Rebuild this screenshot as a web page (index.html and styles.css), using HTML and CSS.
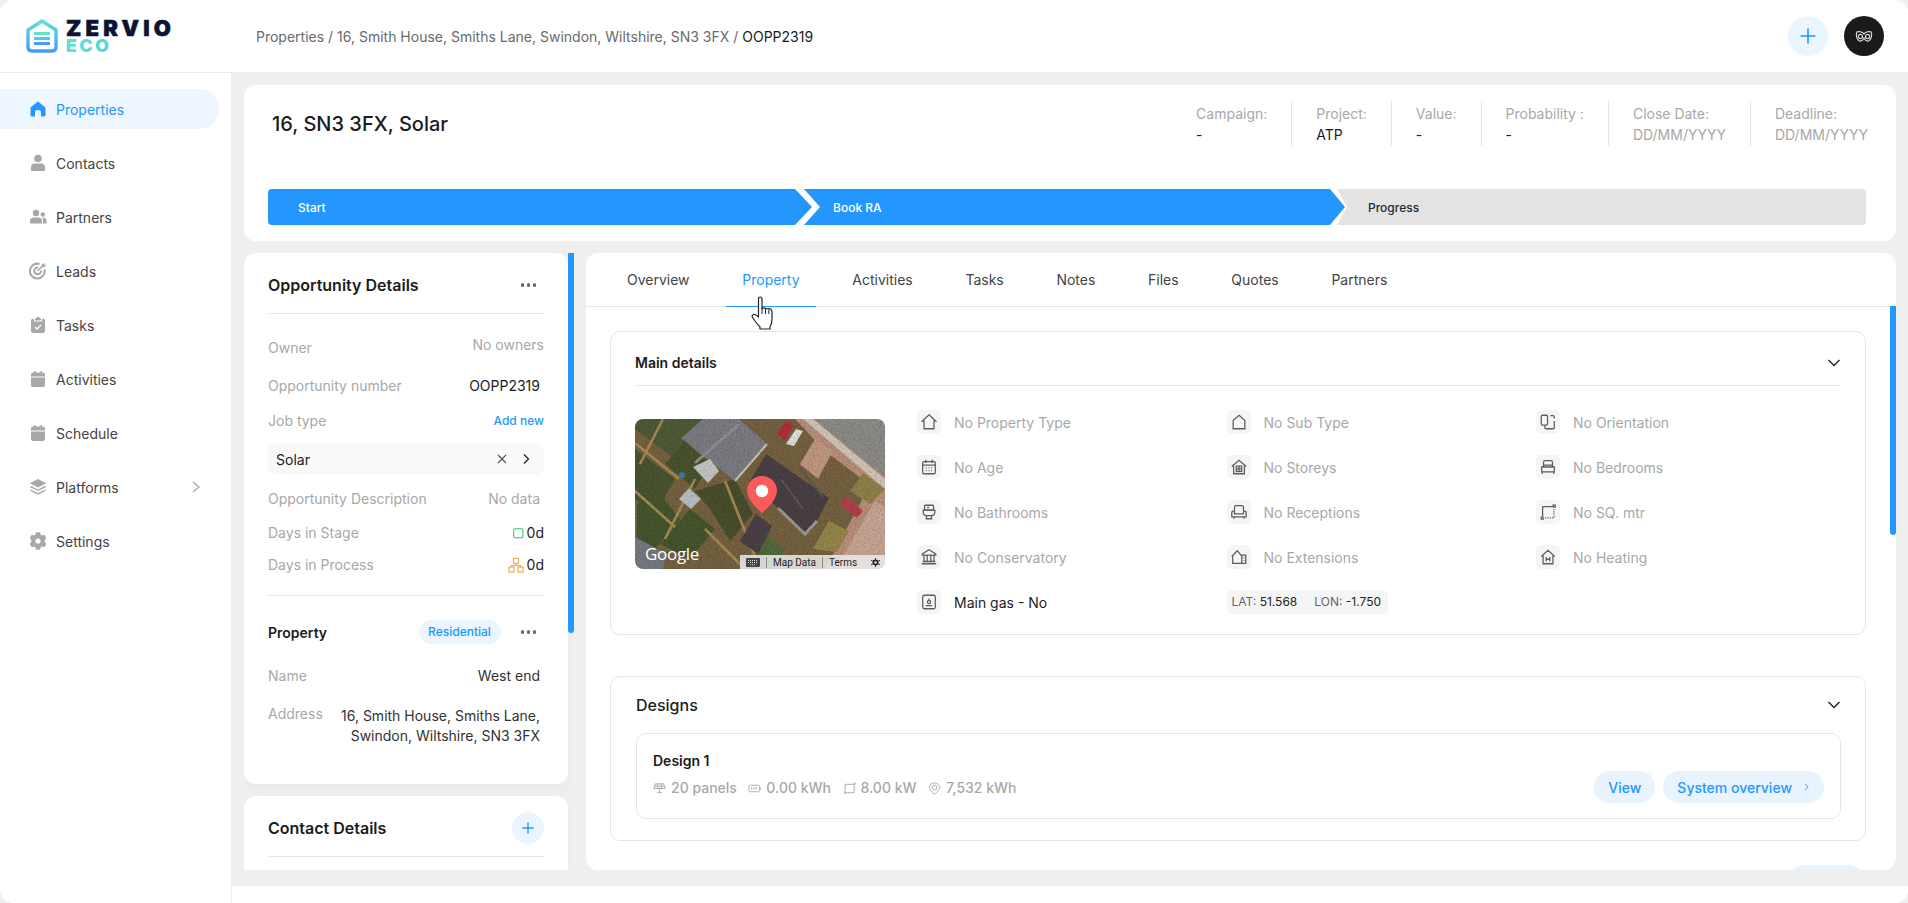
FILE: index.html
```html
<!DOCTYPE html>
<html lang="en">
<head>
    <meta charset="UTF-8">
    <meta name="viewport" content="width=device-width, initial-scale=1.0">
    <title>Zervio Eco - OOPP2319</title>
    <link rel="stylesheet" href="styles.css">
</head>
<body>
<div class="app">

    <header class="topbar">
        <div class="logo">
            <svg class="logo-mark" viewBox="0 0 32 34" width="32" height="34">
                <defs>
                    <linearGradient id="logoGrad" x1="0" y1="0" x2="0" y2="1">
                        <stop offset="0" stop-color="#62e0d6"/>
                        <stop offset="1" stop-color="#3f9dfb"/>
                    </linearGradient>
                </defs>
                <path d="M16 2 L30 11 V28 Q30 32 26 32 H6 Q2 32 2 28 V11 Z" fill="none" stroke="url(#logoGrad)" stroke-width="3.4" stroke-linejoin="round"/>
                <rect x="8" y="13" width="16" height="3" fill="#5fe3d0"/>
                <rect x="8" y="18" width="16" height="3" fill="#53c5ea"/>
                <rect x="8" y="23" width="16" height="3" fill="#459ffa"/>
            </svg>
            <div class="logo-text">
                <span class="logo-name">ZERVIO</span>
                <span class="logo-sub">ECO</span>
            </div>
        </div>
        <div class="breadcrumb">Properties / 16, Smith House, Smiths Lane, Swindon, Wiltshire, SN3 3FX / <b>OOPP2319</b></div>
        <div class="top-actions">
            <button class="round-btn" type="button">
                <svg viewBox="0 0 20 20" width="20" height="20"><path d="M10 2.5V17.5M2.5 10H17.5" stroke="#2497ff" stroke-width="1.6" fill="none"/></svg>
            </button>
            <div class="avatar">
                <svg viewBox="0 0 20 14" width="18" height="13" fill="none" stroke="#d8d8d8" stroke-width="1.3">
                    <path d="M10 4C8 1.5 4 1 2 2 .8 5 1.5 10 5 12 8 13 9.5 10 10 8 10.5 10 12 13 15 12 18.5 10 19.2 5 18 2 16 1 12 1.5 10 4Z"/>
                    <circle cx="6" cy="7" r="2.3"/>
                    <circle cx="14" cy="7" r="2.3"/>
                </svg>
            </div>
        </div>
    </header>

    <nav class="sidebar">
        <a class="nav-item active">
            <svg viewBox="0 0 18 18" width="18" height="18"><path d="M9 1.5 L16.5 7.5 V15 Q16.5 16.5 15 16.5 H12 V12 Q12 10 9 10 6 10 6 12 V16.5 H3 Q1.5 16.5 1.5 15 V7.5 Z" fill="#2497ff"/></svg>
            Properties
        </a>
        <a class="nav-item">
            <svg viewBox="0 0 18 18" width="18" height="18" fill="#a8a8a8"><circle cx="9" cy="4.5" r="3.8"/><path d="M2 17 V13.5 Q2 9.5 6 9.5 H12 Q16 9.5 16 13.5 V17 Z"/></svg>
            Contacts
        </a>
        <a class="nav-item">
            <svg viewBox="0 0 18 18" width="18" height="18" fill="#a8a8a8"><circle cx="7" cy="5" r="3.2"/><circle cx="13.8" cy="6.5" r="2.3"/><path d="M1 15.5 V13 Q1 9.5 4.5 9.5 H9.5 Q13 9.5 13 13 V15.5 Z"/><path d="M14 15.5 V12.5 Q14 10.5 13 9.7 H14.5 Q17.5 9.7 17.5 13 V15.5 Z"/></svg>
            Partners
        </a>
        <a class="nav-item">
            <svg viewBox="0 0 18 18" width="18" height="18" fill="none" stroke="#a8a8a8"><path d="M15.5 7.5 A7.4 7.4 0 1 1 10.5 2" stroke-width="2"/><path d="M12 8.5 A3.4 3.4 0 1 1 9 5.5" stroke-width="2"/><path d="M8.5 9 L14 3.5" stroke-width="1.6"/><path d="M12.5 3 L15 .8 L15.3 2.7 L17.3 3 L15 5.3 H12.5 Z" fill="#a8a8a8" stroke="none"/></svg>
            Leads
        </a>
        <a class="nav-item">
            <svg viewBox="0 0 18 18" width="18" height="18"><path d="M6 2.5 H7 Q7.5 .8 9 .8 10.5 .8 11 2.5 H12 V4.5 H6 Z M4 2.8 H5 V5.5 H13 V2.8 H14 Q16 2.8 16 4.8 V15 Q16 17 14 17 H4 Q2 17 2 15 V4.8 Q2 2.8 4 2.8 Z" fill="#a8a8a8"/><path d="M6 11 L8 13 L12 9" stroke="#fff" stroke-width="1.3" fill="none"/></svg>
            Tasks
        </a>
        <a class="nav-item">
            <svg viewBox="0 0 18 18" width="18" height="18" fill="#a8a8a8"><path d="M5 1h1.5v2.5H5zM11.5 1H13v2.5h-1.5z"/><path d="M4 2.5 H14 Q16 2.5 16 4.5 V6.5 H2 V4.5 Q2 2.5 4 2.5 Z"/><path d="M2 7.5 H16 V15 Q16 17 14 17 H4 Q2 17 2 15 Z"/></svg>
            Activities
        </a>
        <a class="nav-item">
            <svg viewBox="0 0 18 18" width="18" height="18" fill="#a8a8a8"><path d="M5 1h1.5v2.5H5zM11.5 1H13v2.5h-1.5z"/><path d="M4 2.5 H14 Q16 2.5 16 4.5 V6.5 H2 V4.5 Q2 2.5 4 2.5 Z"/><path d="M2 7.5 H16 V15 Q16 17 14 17 H4 Q2 17 2 15 Z"/></svg>
            Schedule
        </a>
        <a class="nav-item">
            <svg viewBox="0 0 18 18" width="18" height="18" fill="#a8a8a8"><path d="M9 1 L17.3 5.3 9 9.5 .7 5.3 Z"/><path d="M2.3 8 L9 11.4 15.7 8 17.3 8.9 9 13 .7 8.9 Z"/><path d="M2.3 11.7 L9 15 15.7 11.7 17.3 12.6 9 16.8 .7 12.6 Z"/></svg>
            Platforms
            <svg class="nav-arrow" viewBox="0 0 10 14" width="10" height="14"><path d="M2 2 L8 7 L2 12" stroke="#a8a8a8" stroke-width="1.3" fill="none"/></svg>
        </a>
        <a class="nav-item">
            <svg viewBox="0 0 18 18" width="18" height="18"><path d="M7.3 .8 H10.7 L11.2 3 13 4 15.2 3.3 16.9 6.2 15.2 7.8 V10.2 L16.9 11.8 15.2 14.7 13 14 11.2 15 10.7 17.2 H7.3 L6.8 15 5 14 2.8 14.7 1.1 11.8 2.8 10.2 V7.8 L1.1 6.2 2.8 3.3 5 4 6.8 3 Z" fill="#a8a8a8" stroke="#a8a8a8" stroke-linejoin="round"/><circle cx="9" cy="9" r="2.6" fill="#fff"/></svg>
            Settings
        </a>
    </nav>

    <div class="main">
        <main class="content">

            <section class="card summary">
                <div class="summary-top">
                    <h1>16, SN3 3FX, Solar</h1>
                    <div class="meta">
                        <div class="meta-item"><span>Campaign:</span><b>-</b></div>
                        <div class="meta-item"><span>Project:</span><b>ATP</b></div>
                        <div class="meta-item"><span>Value:</span><b>-</b></div>
                        <div class="meta-item"><span>Probability :</span><b>-</b></div>
                        <div class="meta-item"><span>Close Date:</span><b class="muted">DD/MM/YYYY</b></div>
                        <div class="meta-item"><span>Deadline:</span><b class="muted">DD/MM/YYYY</b></div>
                    </div>
                </div>
                <div class="stepper">
                    <div class="step step-first">Start</div>
                    <div class="step step-mid">Book RA</div>
                    <div class="step step-last">Progress</div>
                </div>
            </section>

            <div class="columns">
                <aside class="left-col">
                    <section class="card info-card">
                        <div class="info-head">
                            <h2>Opportunity Details</h2>
                            <span class="dots"><i></i><i></i><i></i></span>
                        </div>
                        <div class="row row-owner"><label>Owner</label><span class="soft">No owners</span></div>
                        <div class="row row-number"><label>Opportunity number</label><span class="inset">OOPP2319</span></div>
                        <div class="row row-job"><label>Job type</label><a class="add-new">Add new</a></div>
                        <div class="job-box">
                            <span>Solar</span>
                            <svg viewBox="0 0 12 12" width="12" height="12"><path d="M2 2 L10 10 M10 2 L2 10" stroke="#555" stroke-width="1.1"/></svg>
                            <svg viewBox="0 0 12 12" width="12" height="12"><path d="M4 1.5 L8.5 6 L4 10.5" stroke="#222" stroke-width="1.3" fill="none"/></svg>
                        </div>
                        <div class="row row-desc"><label>Opportunity Description</label><span class="soft inset">No data</span></div>
                        <div class="row row-stage">
                            <label>Days in Stage</label>
                            <span class="days">
                                <svg viewBox="0 0 12 12" width="11" height="11"><rect x=".75" y=".75" width="10" height="10" rx="1.5" fill="none" stroke="#28c76f" stroke-width="1.1"/></svg>
                                0d
                            </span>
                        </div>
                        <div class="row row-process">
                            <label>Days in Process</label>
                            <span class="days">
                                <svg viewBox="0 0 16 16" width="16" height="16" fill="none" stroke="#f5a94a" stroke-width="1.2"><rect x="5.5" y="1.5" width="5" height="5"/><rect x="1" y="10" width="5" height="5"/><rect x="10" y="10" width="5" height="5"/><path d="M8 6.5V8.5H3.5V10M8 8.5H12.5V10"/></svg>
                                0d
                            </span>
                        </div>
                        <hr class="rule rule-prop">
                        <div class="prop-head">
                            <h3>Property</h3>
                            <span class="pill">Residential</span>
                            <span class="dots"><i></i><i></i><i></i></span>
                        </div>
                        <div class="row row-name"><label>Name</label><span class="inset dim">West end</span></div>
                        <div class="row row-address"><label>Address</label><span class="inset dim address">16, Smith House, Smiths Lane, Swindon, Wiltshire, SN3 3FX</span></div>
                    </section>

                    <section class="card info-card contact-card">
                        <div class="info-head">
                            <h2>Contact Details</h2>
                            <button class="round-btn small" type="button">
                                <svg viewBox="0 0 16 16" width="14" height="14"><path d="M8 1.5V14.5M1.5 8H14.5" stroke="#2497ff" stroke-width="1.5" fill="none"/></svg>
                            </button>
                        </div>
                    </section>
                    <div class="scroll-thumb left-thumb"></div>
                </aside>

                <section class="card detail">
                    <div class="tabs">
                        <a class="tab">Overview</a>
                        <a class="tab active">Property</a>
                        <a class="tab">Activities</a>
                        <a class="tab">Tasks</a>
                        <a class="tab">Notes</a>
                        <a class="tab">Files</a>
                        <a class="tab">Quotes</a>
                        <a class="tab">Partners</a>
                    </div>
                    <div class="detail-body">
                        <div class="box main-details">
                            <div class="box-head">
                                <h4>Main details</h4>
                                <svg viewBox="0 0 14 10" width="14" height="10"><path d="M1.5 2 L7 7.5 L12.5 2" stroke="#222" stroke-width="1.4" fill="none"/></svg>
                            </div>
                            <div class="details-row">
                                <div class="map">
                                    <svg viewBox="0 0 250 150" width="250" height="150">
                                        <defs>
                                            <filter id="grain" x="0" y="0" width="100%" height="100%">
                                                <feTurbulence type="fractalNoise" baseFrequency="0.55" numOctaves="2" seed="4" result="n"/>
                                                <feColorMatrix in="n" type="matrix" values="0 0 0 0 0  0 0 0 0 0  0 0 0 0 0  0 0 0 .7 -.25" result="d"/>
                                                <feGaussianBlur in="SourceGraphic" stdDeviation=".5" result="b"/>
                                                <feComposite in="d" in2="b" operator="over"/>
                                            </filter>
                                        </defs>
                                        <g filter="url(#grain)">
                                            <rect width="250" height="150" fill="#76623f"/>
                                            <path d="M0 0H70L40 40 0 10Z" fill="#4f5b35"/>
                                            <path d="M0 30L40 60 20 95 0 80Z" fill="#4a5530"/>
                                            <path d="M30 45L60 70 75 45 50 22Z" fill="#49522f"/>
                                            <path d="M2 85L25 75 45 100 20 130 2 120Z" fill="#44562f"/>
                                            <path d="M25 125L55 90 80 110 55 140Z" fill="#44562f"/>
                                            <path d="M60 72L100 60 118 95 95 122 75 90Z" fill="#48502f"/>
                                            <path d="M130 115L150 130 140 150H115Z" fill="#536b3a"/>
                                            <path d="M0 72L40 108M0 24L44 60M28 0L5 45M60 60L30 120M90 62L125 150M70 110L110 150" stroke="#a98a55" stroke-width="2.6" fill="none"/>
                                            <path d="M175 0H250V60Z" fill="#8e8c87"/>
                                            <path d="M160 0H178L250 58V150H190L235 66 190 32Z" fill="#b98f7d"/>
                                            <path d="M178 0L250 60V70L168 0Z" fill="#d2c6b8"/>
                                            <path d="M165 45L180 20 198 32 183 60Z" fill="#c39882"/>
                                            <path d="M215 72L228 54 250 70 235 85Z" fill="#8e8249"/>
                                            <path d="M178 130L194 102 214 112 202 133Z" fill="#95864a"/>
                                            <path d="M200 150L240 82 250 88V150Z" fill="#c9a594"/>
                                            <path d="M46 19L68 0H104L132 25 100 62Z" fill="#7b7d83"/>
                                            <path d="M60 44L104 5" stroke="#8e9096" stroke-width="3"/>
                                            <path d="M100 62L132 25" stroke="#c9c5bb" stroke-width="2"/>
                                            <path d="M115 62L131 35 194 79 182 102 170 115 143 89Z" fill="#4a4145"/>
                                            <path d="M146 60L168 90M164 48L188 78" stroke="#5f585a" stroke-width="2" fill="none"/>
                                            <path d="M143 89L170 115 182 102" stroke="#9b9a90" stroke-width="3" fill="none"/>
                                            <path d="M105 122L121 95 137 107 123 135Z" fill="#4d4148"/>
                                            <path d="M0 118L32 135 28 150H0Z" fill="#777a80"/>
                                            <path d="M58 48L75 40 84 52 73 64Z" fill="#c3c6c3"/>
                                            <path d="M44 80L54 69 66 80 56 90Z" fill="#b8c0c2"/>
                                            <path d="M142 15L151 2 159 5 150 22Z" fill="#b32f3a"/>
                                            <path d="M151 25L161 10 168 12 159 27Z" fill="#dfdfdc"/>
                                            <path d="M205 86L211 77 228 92 222 99Z" fill="#b4404c"/>
                                            <circle cx="47" cy="56" r="3" fill="#3b7fa5"/>
                                        </g>
                                        <path d="M127 57C135.3 57 142 63.6 142 71.5 142 81 131 90 127 94.5 123 90 112 81 112 71.5 112 63.6 118.7 57 127 57Z" fill="#fb5b5b"/>
                                        <circle cx="127" cy="72" r="6.2" fill="#fff"/>
                                    </svg>
                                    <span class="map-logo">Google</span>
                                    <div class="map-strip">
                                        <svg viewBox="0 0 14 9" width="14" height="9"><rect width="14" height="9" rx="1" fill="#444"/><path d="M2 2.5H12M2 4.5H12M4 6.8H10" stroke="#ddd" stroke-dasharray="1 1"/></svg>
                                        <span>Map Data</span>
                                        <span>Terms</span>
                                        <svg class="map-bug" viewBox="0 0 10 10" width="9" height="9"><circle cx="5" cy="5" r="3.3" fill="#222"/><path d="M0 2.5L10 7.5M0 7.5L10 2.5M5 0V10" stroke="#222"/><circle cx="5" cy="5" r="1.5" fill="#ddd"/></svg>
                                    </div>
                                </div>
                                <div class="prop-grid">
                                    <div class="prop"><span class="prop-icon"><svg viewBox="0 0 20 20"><path d="M10 2 L17.5 9 H15.5 V17.5 H4.5 V9 H2.5 Z"/></svg></span>No Property Type</div>
                                    <div class="prop"><span class="prop-icon"><svg viewBox="0 0 20 20"><path d="M10 2.5 L16.5 8.5 V17.5 H3.5 V8.5 Z"/></svg></span>No Sub Type</div>
                                    <div class="prop"><span class="prop-icon"><svg viewBox="0 0 20 20"><rect x="2.5" y="2.5" width="7" height="11" rx="1.5"/><path d="M12.5 3 H15.5 Q17 3 17 4.5 V6 M17 9 V16 Q17 17.5 15.5 17.5 H8 Q6.5 17.5 6.5 16 V14"/></svg></span>No Orientation</div>

                                    <div class="prop"><span class="prop-icon"><svg viewBox="0 0 20 20"><rect x="3" y="4" width="14" height="13.5" rx="1.5"/><path d="M6.5 2V5.5M13.5 2V5.5M3 8H17M6.5 11H7.5M9.5 11H10.5M12.5 11H13.5M6.5 14H7.5M9.5 14H10.5M12.5 14H13.5"/></svg></span>No Age</div>
                                    <div class="prop"><span class="prop-icon"><svg viewBox="0 0 20 20"><path d="M2 9.5 L10 2.5 L18 9.5 M4 8 V17.5 H16 V8"/><rect x="7" y="9" width="6" height="6"/><path d="M7 12H13M10 9V15"/></svg></span>No Storeys</div>
                                    <div class="prop"><span class="prop-icon"><svg viewBox="0 0 20 20"><path d="M5 10 V5 Q5 3 7 3 H13 Q15 3 15 5 V10 M3 10 H17 V15.5 H3 Z M3.5 15.5 V17.5 M16.5 15.5 V17.5 M5 8 H15"/></svg></span>No Bedrooms</div>

                                    <div class="prop"><span class="prop-icon"><svg viewBox="0 0 20 20"><rect x="5" y="2.5" width="10" height="5.5" rx="1"/><path d="M3.5 8 H16.5 V10 Q16.5 14 12.5 14 H7.5 Q3.5 14 3.5 10 Z M7.5 14 L7 17.5 H13 L12.5 14 M8 5H10"/></svg></span>No Bathrooms</div>
                                    <div class="prop"><span class="prop-icon"><svg viewBox="0 0 20 20"><path d="M5 9 V5 Q5 3 7 3 H13 Q15 3 15 5 V9 M5 12 V10 Q5 9 3.5 9 2 9 2 10.5 V15.5 H18 V10.5 Q18 9 16.5 9 15 9 15 10 V12 Z M4.5 15.5V17.5M15.5 15.5V17.5"/></svg></span>No Receptions</div>
                                    <div class="prop"><span class="prop-icon"><svg viewBox="0 0 20 20"><path d="M4 4 H16.5 M4 4 V16.5"/><path d="M16.5 4 V16.5 H4" stroke-dasharray="1.3 1.3"/><path d="M15 2.5 H18 V5.5 M2.5 15 V18 H5.5"/></svg></span>No SQ. mtr</div>

                                    <div class="prop"><span class="prop-icon"><svg viewBox="0 0 20 20"><path d="M10 2 L17.5 6.5 V8 H2.5 V6.5 Z M4.5 8 V15 M8 8 V15 M12 8 V15 M15.5 8 V15 M3 15 H17 M2 17.5 H18"/></svg></span>No Conservatory</div>
                                    <div class="prop"><span class="prop-icon"><svg viewBox="0 0 20 20"><path d="M2 9.5 L8 3 L13 9 V17 H3 V9 M13 8 H17.5 V17 H13 M15 11H16M15 14H16"/></svg></span>No Extensions</div>
                                    <div class="prop"><span class="prop-icon"><svg viewBox="0 0 20 20"><path d="M2.5 9.5 L10 2.5 L17.5 9.5 M4.5 8 V17.5 H15.5 V8 M8 10 V15 M12 10 V15 M8 12.5 H12"/></svg></span>No Heating</div>

                                    <div class="prop filled"><span class="prop-icon"><svg viewBox="0 0 20 20"><rect x="3" y="2.5" width="14" height="15" rx="2"/><circle cx="10" cy="10" r="1.8"/><path d="M10 6 V8 M6.5 14 H13.5"/></svg></span>Main gas - No</div>
                                    <div class="coords"><span>LAT:</span> <b>51.568</b><span class="lon">LON:</span> <b>-1.750</b></div>
                                </div>
                            </div>
                        </div>

                        <div class="box designs">
                            <div class="designs-head">
                                <h4>Designs</h4>
                                <svg viewBox="0 0 14 10" width="14" height="10"><path d="M1.5 2 L7 7.5 L12.5 2" stroke="#222" stroke-width="1.4" fill="none"/></svg>
                            </div>
                            <div class="design-card">
                                <div>
                                    <h5>Design 1</h5>
                                    <div class="stats">
                                        <span><svg viewBox="0 0 14 14"><path d="M2.5 2 H11.5 L13 7 H1 Z M1.5 4.5 H12.5 M5 2 V7 M9 2 V7 M7 7 V11 M4.5 11.5 H9.5"/></svg>20 panels</span>
                                        <span><svg viewBox="0 0 14 14"><rect x="1" y="3.5" width="11.5" height="7" rx="1.5"/><path d="M13.5 6 V8 M4 5.5 V8.5 M6.5 5.5 V8.5 M9 5.5 V8.5"/></svg>0.00 kWh</span>
                                        <span><svg viewBox="0 0 14 14"><path d="M2.5 2.5 H12 V11.5 H2 L2.5 2.5 Z M1 12.5 H3 M11.5 1 H13 V3"/></svg>8.00 kW</span>
                                        <span><svg viewBox="0 0 14 14"><path d="M7 13 C3 10 1.5 7.5 1.5 5.8 1.5 3 4 1 7 1 10 1 12.5 3 12.5 5.8 12.5 7.5 11 10 7 13Z"/><circle cx="7" cy="6" r="2.5"/></svg>7,532 kWh</span>
                                    </div>
                                </div>
                                <div class="design-actions">
                                    <a class="soft-btn">View</a>
                                    <a class="soft-btn">System overview
                                        <svg viewBox="0 0 8 12" width="7" height="10"><path d="M2 2 L6 6 L2 10" stroke="#2497ff" stroke-width="1.1" fill="none"/></svg>
                                    </a>
                                </div>
                            </div>
                        </div>

                        <div class="peek"><span class="soft-btn peek-btn"></span></div>
                    </div>
                    <div class="scroll-thumb right-thumb"></div>

                    <svg class="cursor" viewBox="0 0 26 34" width="26" height="34">
                        <path d="M8.5 21 V3 Q8.5 1 10.2 1 12 1 12 3 V13 L13 12 Q15 11.5 15.5 13 16.5 12 18 13 18.8 12.3 20.5 13 22 14 22 16 V23 Q22 28 20 30.5 V33 H10 V31 Q8 29 5 25 L2.5 21.5 Q1.5 19.5 3.5 18.5 5.5 18 8.5 21Z" fill="#fff" stroke="#1b2233" stroke-width="1.2" stroke-linejoin="round"/>
                        <path d="M12 13 V18 M15.5 13 V18 M18.8 13.5 V18" stroke="#1b2233" stroke-width="1" fill="none"/>
                    </svg>
                </section>
            </div>
        </main>
        <div class="footer-strip"></div>
    </div>
</div>
</body>
</html>
```

FILE: styles.css
```css
* {
    box-sizing: border-box;
}
html, body {
    margin: 0;
    height: 100%;
    overflow: hidden;
    background: #efefef;
}
body {
    font-family: Inter, "Liberation Sans", sans-serif;
    font-size: 14px;
    color: #1c1c1c;
}
h1, h2, h3, h4, h5 {
    margin: 0;
}
.app {
    display: grid;
    grid-template-columns: 232px 1fr;
    grid-template-rows: 73px 1fr;
    height: 903px;
    border-radius: 14px;
    overflow: hidden;
    background: #fff;
}

/* top bar */
.topbar {
    grid-column: 1 / 3;
    display: flex;
    align-items: center;
    border-bottom: 1px solid #e3eef3;
    background: #fff;
}
.logo {
    width: 256px;
    padding-left: 26px;
    display: flex;
    gap: 8px;
    align-items: center;
}
.logo-mark {
    flex: none;
}
.logo-text {
    display: flex;
    flex-direction: column;
}
.logo-name {
    font-weight: 900;
    font-size: 22px;
    line-height: 18px;
    letter-spacing: 4.2px;
    color: #0b1533;
    -webkit-text-stroke: .6px #0b1533;
}
.logo-sub {
    font-weight: 900;
    font-size: 18px;
    line-height: 17px;
    letter-spacing: 2.4px;
    background: linear-gradient(90deg, #5fe3d0, #4fbdf0);
    -webkit-background-clip: text;
    background-clip: text;
    color: transparent;
}
.breadcrumb {
    flex: 1;
    color: #6a6a6a;
}
.breadcrumb b {
    font-weight: 400;
    color: #1c1c1c;
}
.top-actions {
    display: flex;
    gap: 16px;
    padding-right: 24px;
}
.round-btn {
    width: 40px;
    height: 40px;
    border: none;
    border-radius: 50%;
    background: #ebf5ff;
    padding: 0;
    display: flex;
    align-items: center;
    justify-content: center;
}
.round-btn.small {
    width: 32px;
    height: 32px;
}
.avatar {
    width: 40px;
    height: 40px;
    border-radius: 50%;
    background: #1a1a1a;
    display: flex;
    align-items: center;
    justify-content: center;
}

/* sidebar */
.sidebar {
    padding-top: 16px;
    border-right: 1px solid #e8eef1;
    background: #fff;
}
.nav-item {
    display: flex;
    align-items: center;
    gap: 9px;
    width: 219px;
    height: 40px;
    margin-bottom: 14px;
    padding-left: 29px;
    border-radius: 0 20px 20px 0;
    color: #444;
}
.nav-item svg {
    flex: none;
}
.nav-item.active {
    background: #eef6ff;
    color: #2497ff;
}
.nav-item .nav-arrow {
    margin-left: auto;
    margin-right: 18px;
}

/* content */
.main {
    display: flex;
    flex-direction: column;
    min-height: 0;
}
.content {
    flex: 1;
    min-height: 0;
    display: flex;
    flex-direction: column;
    gap: 12px;
    padding: 12px 12px 16px;
    background: #efefef;
}
.footer-strip {
    height: 17px;
    flex: none;
    background: #fff;
}
.card {
    background: #fff;
    border-radius: 12px;
}
.summary {
    height: 156px;
    flex: none;
    padding: 0 28px 16px 24px;
    display: flex;
    flex-direction: column;
    justify-content: space-between;
}
.summary-top {
    display: flex;
    justify-content: space-between;
    padding: 16px 0 0 4px;
}
.summary h1 {
    font-size: 20px;
    font-weight: 500;
    line-height: 24px;
    margin-top: 11px;
}
.meta {
    display: flex;
    text-align: left;
}
.meta-item {
    display: flex;
    flex-direction: column;
    gap: 5px;
    height: 45px;
    padding: 5px 24px 0 24px;
    border-left: 1px solid #e4e4e4;
    line-height: 16px;
}
.meta-item:first-child {
    border-left: none;
}
.meta-item:last-child {
    padding-right: 0;
}
.meta-item span {
    color: #a8a8a8;
}
.meta-item b {
    font-weight: 400;
}
.meta-item b.muted {
    color: #a8a8a8;
}
.stepper {
    display: flex;
    height: 36px;
    margin-right: 2px;
}
.step {
    display: flex;
    align-items: center;
    font-size: 12px;
    font-weight: 500;
    color: #fff;
    background: #2497ff;
}
.step-first {
    width: 544px;
    padding-left: 30px;
    border-radius: 4px 0 0 4px;
    clip-path: polygon(0 0, 527px 0, 100% 50%, 527px 100%, 0 100%);
}
.step-mid {
    width: 541px;
    margin-left: -8px;
    padding-left: 29px;
    clip-path: polygon(0 0, 526px 0, 100% 50%, 526px 100%, 0 100%, 16px 50%);
}
.step-last {
    flex: 1;
    margin-left: -8px;
    padding-left: 31px;
    color: #1f2a33;
    background: #e3e3e3;
    border-radius: 0 4px 4px 0;
    clip-path: polygon(0 0, 100% 0, 100% 100%, 0 100%, 10px 50%);
}

.columns {
    flex: 1;
    min-height: 0;
    display: flex;
    gap: 12px;
}
.left-col {
    position: relative;
    width: 330px;
    flex: none;
    padding-right: 6px;
    display: flex;
    flex-direction: column;
    gap: 12px;
    overflow: hidden;
}
.info-card {
    padding: 0 24px 38px;
    flex: none;
    box-shadow: 0 4px 12px rgba(0, 0, 0, .03);
}
.contact-card {
    border-radius: 12px 12px 0 0;
    padding-bottom: 0;
    flex: 1;
}
.info-head {
    display: flex;
    align-items: center;
    justify-content: space-between;
    height: 61px;
    padding-top: 4px;
    border-bottom: 1px solid #e6e6e6;
}
.info-head h2 {
    font-size: 16px;
    font-weight: 600;
}
.dots {
    display: flex;
    gap: 2.5px;
    margin-right: 8px;
}
.dots i {
    width: 3.5px;
    height: 3.5px;
    border-radius: 50%;
    background: #666;
}
.row {
    display: flex;
    justify-content: space-between;
    align-items: flex-start;
    line-height: 20px;
}
.row label {
    color: #a8a8a8;
}
.soft {
    color: #a8a8a8;
}
.inset {
    padding-right: 4px;
}
.dim {
    color: #333;
}
.row-owner {
    margin-top: 21px;
}
.row-owner label {
    padding-top: 3px;
}
.row-number {
    margin-top: 18px;
}
.row-job {
    margin-top: 15px;
}
.add-new {
    font-size: 12px;
    font-weight: 500;
    color: #2497ff;
}
.job-box {
    display: flex;
    align-items: center;
    gap: 12px;
    height: 32px;
    margin-top: 12px;
    padding: 0 12px 0 8px;
    border-radius: 8px;
    background: #f9f9f9;
}
.job-box span {
    flex: 1;
}
.row-desc {
    margin-top: 14px;
}
.row-stage {
    margin-top: 14px;
}
.row-process {
    margin-top: 12px;
}
.days {
    display: flex;
    align-items: center;
    gap: 3px;
}
.rule {
    border: none;
    border-top: 1px solid #e6e6e6;
    margin: 0;
}
.rule-prop {
    margin-top: 20px;
}
.prop-head {
    display: flex;
    align-items: center;
    height: 24px;
    margin-top: 24px;
}
.prop-head h3 {
    flex: 1;
    font-size: 14px;
    font-weight: 600;
}
.pill {
    width: 82px;
    height: 24px;
    margin-right: 20px;
    border-radius: 12px;
    background: #ebf5ff;
    color: #2497ff;
    font-size: 12px;
    font-weight: 500;
    line-height: 24px;
    text-align: center;
}
.row-name {
    margin-top: 22px;
}
.row-address {
    margin-top: 18px;
}
.address {
    width: 205px;
    padding-top: 2px;
    text-align: right;
}
.scroll-thumb {
    position: absolute;
    width: 6px;
    border-radius: 0 0 4px 4px;
    background: #2497ff;
}
.left-thumb {
    top: 0;
    right: 0;
    height: 380px;
}
.right-thumb {
    top: 53px;
    right: 0;
    height: 229px;
}

/* right panel */
.detail {
    position: relative;
    flex: 1;
    min-width: 0;
    overflow: hidden;
}
.tabs {
    display: flex;
    gap: 20.7px;
    height: 54px;
    padding: 0 25px;
    border-bottom: 1px solid #e6e6e6;
}
.tab {
    padding: 0 16px;
    margin-bottom: -1px;
    line-height: 54px;
    color: #444;
    border-bottom: 1px solid transparent;
}
.tab.active {
    color: #2497ff;
    border-bottom-color: #2497ff;
}
.detail-body {
    padding: 24px 30px 0 24px;
}
.box {
    border: 1px solid #e6e6e6;
    border-radius: 10px;
}
.main-details {
    height: 304px;
    padding: 0 24px;
}
.box-head {
    display: flex;
    align-items: center;
    justify-content: space-between;
    height: 54px;
    padding: 8px 0 0;
    border-bottom: 1px solid #e6e6e6;
}
.box h4 {
    font-size: 14px;
    font-weight: 600;
}
.details-row {
    display: flex;
    gap: 32px;
    padding-top: 24px;
}
.map {
    position: relative;
    width: 250px;
    height: 150px;
    margin-top: 9px;
    flex: none;
    border-radius: 8px;
    overflow: hidden;
}
.map svg {
    display: block;
}
.map-logo {
    position: absolute;
    left: 10px;
    bottom: 4px;
    font-family: "Open Sans", sans-serif;
    font-size: 17px;
    color: #fff;
    letter-spacing: -.3px;
}
.map-strip {
    position: absolute;
    right: 0;
    bottom: 0;
    display: flex;
    align-items: center;
    gap: 6px;
    width: 145px;
    height: 14px;
    padding: 0 4px 0 6px;
    background: rgba(235, 235, 235, .85);
    font-family: Roboto, sans-serif;
    font-size: 10px;
    color: #222;
}
.map-strip span {
    padding-left: 6px;
    border-left: 1px solid #8d8d8d;
}
.map-strip .map-bug {
    margin-left: 8px;
}
.prop-grid {
    display: grid;
    grid-template-columns: 309.5px 309.5px 1fr;
    grid-auto-rows: 24px;
    row-gap: 21px;
    flex: 1;
}
.prop {
    display: flex;
    align-items: center;
    gap: 13px;
    color: #a8a8a8;
}
.prop.filled {
    color: #1c1c1c;
}
.prop-icon {
    width: 24px;
    height: 24px;
    display: flex;
    align-items: center;
    justify-content: center;
    border-radius: 5px;
    background: #f5f5f5;
}
.prop-icon svg {
    width: 18px;
    height: 18px;
    fill: none;
    stroke: #5c5c5c;
    stroke-width: 1.4;
}
.coords {
    grid-column: 2 / 4;
    justify-self: start;
    width: 161px;
    padding: 0 5px;
    border-radius: 5px;
    background: #f5f5f5;
    font-size: 12px;
    line-height: 24px;
    color: #666;
    white-space: nowrap;
}
.coords b {
    font-weight: 400;
    color: #222;
}
.lon {
    margin-left: 17px;
}
.designs {
    height: 165px;
    margin-top: 41px;
    padding: 0 24px 0 25px;
}
.designs-head {
    display: flex;
    align-items: center;
    justify-content: space-between;
    height: 56px;
}
.designs-head h4 {
    font-size: 16px;
    font-weight: 500;
}
.design-card {
    display: flex;
    justify-content: space-between;
    align-items: flex-end;
    height: 86px;
    padding: 0 16px 15px;
    border: 1px solid #e6e6e6;
    border-radius: 10px;
}
.design-card h5 {
    font-size: 14px;
    font-weight: 600;
    line-height: 20px;
    margin-bottom: 7px;
}
.stats {
    display: flex;
    gap: 11.5px;
    margin-bottom: 5px;
    line-height: 20px;
    color: #a8a8a8;
    font-weight: 500;
}
.stats span {
    display: flex;
    align-items: center;
    gap: 5px;
}
.stats svg {
    width: 13px;
    height: 13px;
    fill: none;
    stroke: #a8a8a8;
    stroke-width: 1;
}
.design-actions {
    display: flex;
    gap: 8px;
}
.soft-btn {
    display: flex;
    align-items: center;
    gap: 11px;
    height: 32px;
    padding: 0 14px;
    border-radius: 16px;
    background: #e8f3fe;
    color: #2497ff;
    font-weight: 500;
}
.peek {
    display: flex;
    justify-content: flex-end;
    margin-top: 24px;
    padding-right: 2px;
}
.peek-btn {
    width: 76px;
}
.cursor {
    position: absolute;
    left: 164px;
    top: 43px;
}
```
